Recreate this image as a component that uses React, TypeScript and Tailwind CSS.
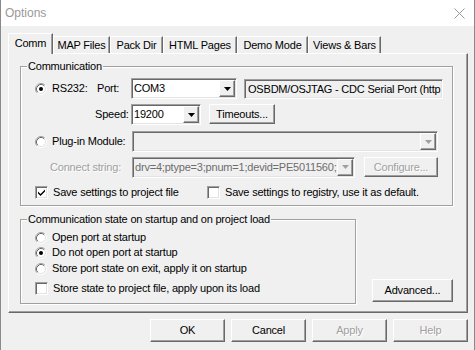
import React from "react";

const sunken =
  "border border-t-[#a0a0a0] border-l-[#a0a0a0] border-r-white border-b-white shadow-[inset_1px_1px_0_#696969,inset_-1px_-1px_0_#e3e3e3]";
const raised =
  "border border-t-white border-l-white border-r-[#696969] border-b-[#696969] shadow-[inset_-1px_-1px_0_#a0a0a0]";
const etched = "border border-[#a0a0a0] shadow-[1px_1px_0_#fff,inset_1px_1px_0_#fff]";
const grayText = "text-[#a0a0a0] [text-shadow:1px_1px_0_#fff]";

function Radio({ checked }: { checked?: boolean }) {
  return (
    <svg width="12" height="12" viewBox="0 0 12 12" className="shrink-0">
      <circle cx="6" cy="6" r="4.5" fill="#fff" />
      <path d="M9.89 2.11A5.5 5.5 0 0 0 2.11 9.89" fill="none" stroke="#a0a0a0" />
      <path d="M2.11 9.89A5.5 5.5 0 0 0 9.89 2.11" fill="none" stroke="#fff" />
      <path d="M9.18 2.82A4.5 4.5 0 0 0 2.82 9.18" fill="none" stroke="#696969" />
      <path d="M2.82 9.18A4.5 4.5 0 0 0 9.18 2.82" fill="none" stroke="#e3e3e3" />
      {checked && <circle cx="6" cy="6" r="2" fill="#000" />}
    </svg>
  );
}

function Check({ checked }: { checked?: boolean }) {
  return (
    <span className={`flex h-[13px] w-[13px] shrink-0 items-center justify-center bg-white ${sunken}`}>
      {checked && (
        <svg width="7" height="7" viewBox="0 0 7 7">
          <path d="M0 2.5L2.5 5 7 0.5V2.5L2.5 7 0 4.5Z" fill="#000" />
        </svg>
      )}
    </span>
  );
}

function Arrow({ disabled }: { disabled?: boolean }) {
  return (
    <span className={`flex h-full w-[16px] shrink-0 items-center justify-center bg-[#f0f0f0] ${raised}`}>
      <svg width="7" height="4" viewBox="0 0 7 4">
        <path d="M0 0H7L3.5 4Z" fill={disabled ? "#a0a0a0" : "#000"} />
      </svg>
    </span>
  );
}

function Combo({
  width,
  value,
  disabled,
}: {
  width: string;
  value?: string;
  disabled?: boolean;
}) {
  return (
    <div
      className={`flex h-[21px] shrink-0 p-[1px] ${width} ${sunken} ${
        disabled ? "bg-[#f0f0f0] text-[#6d6d6d]" : "bg-white"
      }`}
    >
      <span className="flex flex-1 items-center overflow-hidden whitespace-nowrap pl-[1px]">
        {value}
      </span>
      <Arrow disabled={disabled} />
    </div>
  );
}

function Btn({
  children,
  className,
  disabled,
}: {
  children: React.ReactNode;
  className: string;
  disabled?: boolean;
}) {
  return (
    <div
      className={`flex shrink-0 items-center justify-center bg-[#f0f0f0] ${raised} ${className} ${
        disabled ? grayText : ""
      }`}
    >
      {children}
    </div>
  );
}

function Tab({ label, width, active }: { label: string; width: string; active?: boolean }) {
  return (
    <div
      className={`flex items-center justify-center border-l border-t border-r border-l-white border-t-white border-r-[#696969] bg-[#f0f0f0] shadow-[inset_-1px_0_0_#a0a0a0] ${width} ${
        active ? "relative z-10 -mb-[1px] h-[21px] pb-[1px]" : "h-[17px]"
      }`}
    >
      {label}
    </div>
  );
}

const tabs = [
  { label: "Comm", width: "w-[45px]", active: true },
  { label: "MAP Files", width: "w-[57px]" },
  { label: "Pack Dir", width: "w-[53px]" },
  { label: "HTML Pages", width: "w-[74px]" },
  { label: "Demo Mode", width: "w-[71px]" },
  { label: "Views & Bars", width: "w-[73px]" },
];

export default function App() {
  return (
    <div className="h-[350px] w-[475px] overflow-hidden border-l border-r border-[#8a8a8a] bg-[#f0f0f0] font-['Liberation_Sans',Arial,sans-serif] text-[11px] leading-none tracking-[-0.2px] text-black">
      {/* title bar */}
      <div className="flex h-[26px] items-center justify-between bg-white pl-[4px] pr-[9px]">
        <span className="text-[12px] tracking-normal text-[#999]">Options</span>
        <svg width="11" height="11" viewBox="0 0 11 11">
          <path d="M0.5 0.5L10.5 10.5M10.5 0.5L0.5 10.5" stroke="#999" strokeWidth="1" />
        </svg>
      </div>

      <div className="pl-[7px] pr-[6px]">
        {/* tabs */}
        <div className="mt-[7px] flex items-end">
          {tabs.map((t) => (
            <Tab key={t.label} label={t.label} width={t.width} active={t.active} />
          ))}
        </div>

        {/* tab page */}
        <div className={`h-[260px] ${raised}`}>
          {/* Communication group */}
          <div className={`relative ml-[11px] mt-[12px] h-[140px] w-[433px] ${etched}`}>
            <span className="absolute -top-[7px] left-[6px] bg-[#f0f0f0] px-[1px] leading-[13px]">
              Communication
            </span>

            <div className="mt-[11px] flex h-[21px] items-center">
              <span className="ml-[14px]">
                <Radio checked />
              </span>
              <span className="ml-[5px] w-[45px]">RS232:</span>
              <span className="w-[34px]">Port:</span>
              <Combo width="w-[106px]" value="COM3" />
              <div
                className={`ml-[7px] flex h-[20px] w-[199px] items-center self-start mt-[1px] overflow-hidden whitespace-nowrap bg-[#f0f0f0] pl-[3px] ${sunken}`}
              >
                OSBDM/OSJTAG - CDC Serial Port (http
              </div>
            </div>

            <div className="mt-[5px] flex h-[21px] items-start">
              <span className="ml-[74px] flex h-[21px] w-[36px] items-center">Speed:</span>
              <Combo width="w-[70px]" value="19200" />
              <Btn className="ml-[8px] h-[20px] w-[66px]">Timeouts...</Btn>
            </div>

            <div className="mt-[6px] flex h-[21px] items-center">
              <span className="ml-[14px]">
                <Radio />
              </span>
              <span className="ml-[5px] w-[80px]">Plug-in Module:</span>
              <Combo width="w-[306px]" disabled />
            </div>

            <div className="mt-[5px] flex h-[20px] items-center">
              <span className={`ml-[29px] w-[82px] ${grayText}`}>Connect string:</span>
              <Combo width="w-[223px]" value="drv=4;ptype=3;pnum=1;devid=PE5011560;" disabled />
              <Btn className="ml-[9px] h-[20px] w-[74px]" disabled>
                Configure...
              </Btn>
            </div>

            <div className="mt-[8px] flex h-[14px] items-center">
              <div className="ml-[14px] flex w-[172px] items-center">
                <Check checked />
                <span className="ml-[5px]">Save settings to project file</span>
              </div>
              <Check />
              <span className="ml-[5px]">Save settings to registry, use it as default.</span>
            </div>
          </div>

          {/* startup group + Advanced */}
          <div className="mt-[13px] flex items-start">
            <div className={`relative ml-[11px] h-[85px] w-[336px] ${etched}`}>
              <span className="absolute -top-[7px] left-[6px] bg-[#f0f0f0] px-[1px] leading-[13px]">
                Communication state on startup and on project load
              </span>
              <div className="mt-[10px] flex h-[15px] items-center pl-[14px]">
                <Radio />
                <span className="ml-[5px]">Open port at startup</span>
              </div>
              <div className="flex h-[15px] items-center pl-[14px]">
                <Radio checked />
                <span className="ml-[5px]">Do not open port at startup</span>
              </div>
              <div className="mt-[1px] flex h-[15px] items-center pl-[14px]">
                <Radio />
                <span className="ml-[5px]">Store port state on exit, apply it on startup</span>
              </div>
              <div className="mt-[5px] flex h-[15px] items-center pl-[14px]">
                <Check />
                <span className="ml-[5px]">Store state to project file, apply upon its load</span>
              </div>
            </div>
            <Btn className="ml-[16px] mt-[60px] h-[23px] w-[81px]">Advanced...</Btn>
          </div>
        </div>

        {/* dialog buttons */}
        <div className="mt-[6px] flex justify-end gap-[6px]">
          <Btn className="h-[23px] w-[75px]">OK</Btn>
          <Btn className="h-[23px] w-[75px]">Cancel</Btn>
          <Btn className="h-[23px] w-[75px]" disabled>
            Apply
          </Btn>
          <Btn className="h-[23px] w-[75px]" disabled>
            Help
          </Btn>
        </div>
      </div>
    </div>
  );
}
